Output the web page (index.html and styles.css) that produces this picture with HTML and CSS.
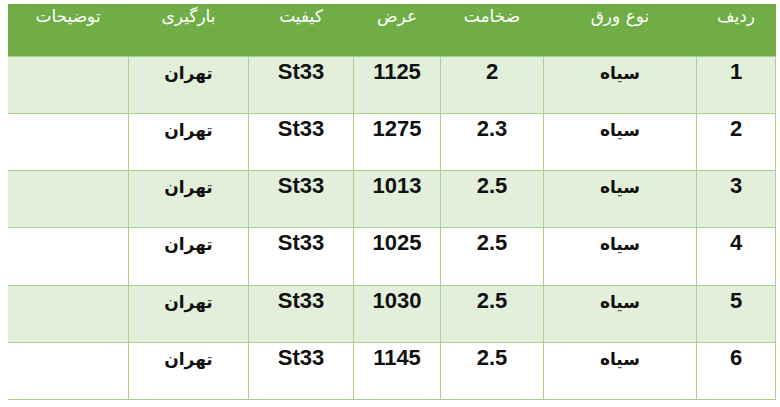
FILE: index.html
```html
<!DOCTYPE html>
<html lang="fa" dir="rtl">
<head>
<meta charset="utf-8">
<link rel="stylesheet" href="styles.css">
</head>
<body>
<table class="grid">
  <colgroup>
    <col class="c-row"><col class="c-type"><col class="c-thick"><col class="c-width"><col class="c-grade"><col class="c-load"><col class="c-note">
  </colgroup>
  <thead>
    <tr class="head">
      <th>ردیف</th><th>نوع ورق</th><th>ضخامت</th><th>عرض</th><th>کیفیت</th><th>بارگیری</th><th>توضیحات</th>
    </tr>
  </thead>
  <tbody>
    <tr class="alt"><td>1</td><td class="fa">سیاه</td><td>2</td><td>1125</td><td>St33</td><td class="fa">تهران</td><td></td></tr>
    <tr><td>2</td><td class="fa">سیاه</td><td>2.3</td><td>1275</td><td>St33</td><td class="fa">تهران</td><td></td></tr>
    <tr class="alt"><td>3</td><td class="fa">سیاه</td><td>2.5</td><td>1013</td><td>St33</td><td class="fa">تهران</td><td></td></tr>
    <tr><td>4</td><td class="fa">سیاه</td><td>2.5</td><td>1025</td><td>St33</td><td class="fa">تهران</td><td></td></tr>
    <tr class="alt"><td>5</td><td class="fa">سیاه</td><td>2.5</td><td>1030</td><td>St33</td><td class="fa">تهران</td><td></td></tr>
    <tr><td>6</td><td class="fa">سیاه</td><td>2.5</td><td>1145</td><td>St33</td><td class="fa">تهران</td><td></td></tr>
  </tbody>
</table>
</body>
</html>
```
FILE: styles.css
```css
html, body {
  background: #ffffff;
}
body {
  margin: 4px 4px 0 8px;
}
.grid {
  width: 768px;
  border-collapse: collapse;
  table-layout: fixed;
  font-family: "Liberation Sans", "DejaVu Sans", sans-serif;
}
.c-row { width: 79px; }
.c-type { width: 153px; }
.c-thick { width: 103px; }
.c-width { width: 87px; }
.c-grade { width: 105px; }
.c-load { width: 120px; }
.c-note { width: 121px; }

.head th {
  background: #70ad47;
  color: #ffffff;
  height: 52px;
  padding: 2px 0 0;
  vertical-align: top;
  font-family: "DejaVu Sans", sans-serif;
  font-weight: normal;
  font-size: 17px;
  letter-spacing: 3px;
  border: none;
  box-sizing: border-box;
}
td {
  height: 57.33px;
  box-sizing: border-box;
  border: 1px solid #a9d08e;
  padding: 2px 0 0;
  vertical-align: top;
  text-align: center;
  font-size: 22px;
  font-weight: bold;
  color: #111111;
}
td.fa {
  font-family: "DejaVu Sans", sans-serif;
  font-size: 17px;
  padding-top: 6px;
}
tr.alt td {
  background: #e2efda;
}
```
